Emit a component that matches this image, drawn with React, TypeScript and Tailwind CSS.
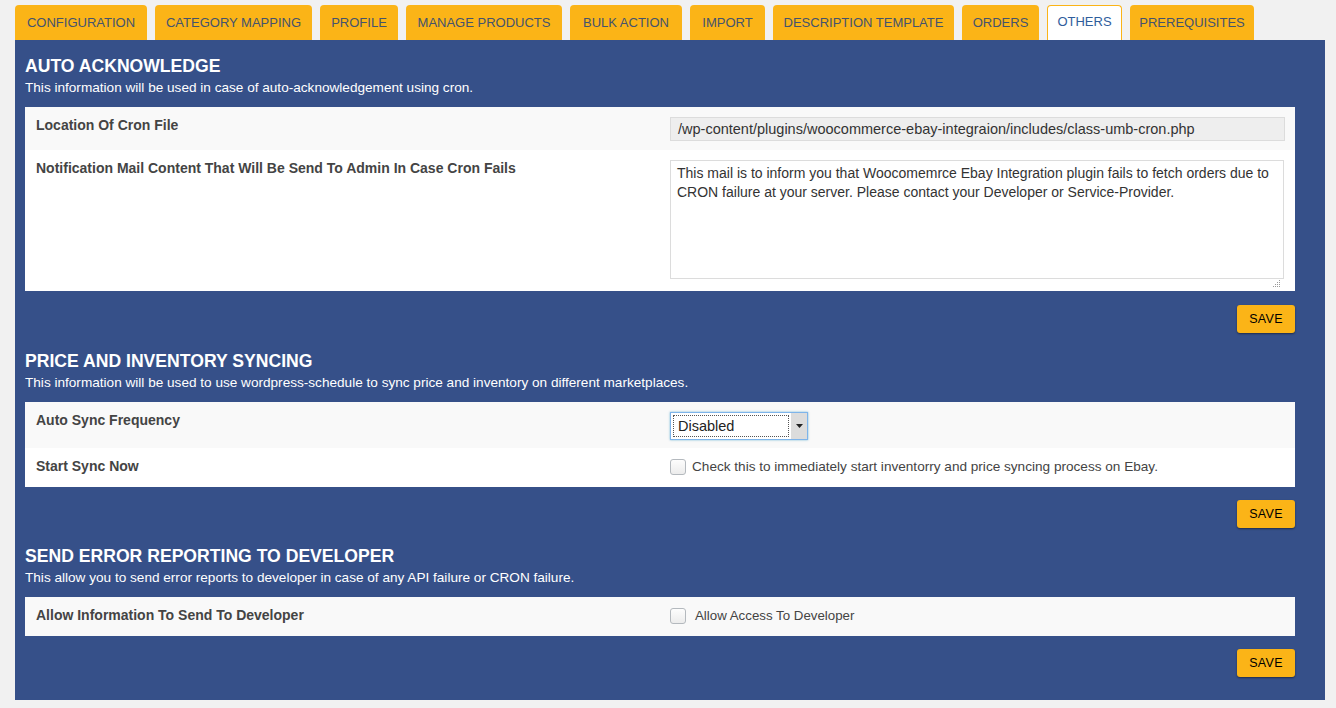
const tabs = [
  { label: 'CONFIGURATION', w: 'w-[132px]' },
  { label: 'CATEGORY MAPPING', w: 'w-[157px]' },
  { label: 'PROFILE', w: 'w-[78px]' },
  { label: 'MANAGE PRODUCTS', w: 'w-[156px]' },
  { label: 'BULK ACTION', w: 'w-[112px]' },
  { label: 'IMPORT', w: 'w-[75px]' },
  { label: 'DESCRIPTION TEMPLATE', w: 'w-[181px]' },
  { label: 'ORDERS', w: 'w-[77px]' },
  { label: 'OTHERS', w: 'w-[75px]', active: true },
  { label: 'PREREQUISITES', w: 'w-[124px]' },
];

const SectionHead = ({ title, sub }: { title: string; sub: string }) => (
  <div>
    <h2 className="text-[17.6px] leading-[24px] font-bold text-white">{title}</h2>
    <p className="mt-[1px] text-[13.6px] leading-[18px] text-white">{sub}</p>
  </div>
);

const SaveButton = ({ first }: { first?: boolean }) => (
  <div className={`flex justify-end ${first ? 'mt-[14px]' : 'mt-[13px]'}`}>
    <button className="h-[28px] w-[58px] rounded-[3px] bg-[#fbb417] text-[12.5px] tracking-wide text-black shadow-[0_1px_2px_rgba(0,0,0,0.45)]">
      SAVE
    </button>
  </div>
);

const Checkbox = () => (
  <span className="inline-block h-[16px] w-[16px] shrink-0 rounded-[3px] border border-[#b4b9be] bg-gradient-to-b from-[#fdfdfd] to-[#ececec]"></span>
);

const Label = ({ children }: { children: string }) => (
  <div className="w-[645px] shrink-0 pl-[11px] text-[14px] leading-[16px] font-bold text-[#444]">{children}</div>
);

export default function App() {
  return (
    <div
      className="min-h-screen bg-[#f1f1f1] pt-[5px] pl-[15px] pr-[11px]"
      style={{ fontFamily: '"Liberation Sans", Arial, sans-serif' }}
    >
      {/* Tabs */}
      <div className="flex gap-2 h-[35px]">
        {tabs.map((t) => (
          <div
            key={t.label}
            className={`${t.w} flex items-center justify-center rounded-t-[4px] text-[13px] ${
              t.active
                ? 'bg-white border border-b-0 border-[#fbb417] text-[#2f5d9c] pb-[3px]'
                : 'bg-[#fbb417] text-[#44536e] pt-[1px]'
            }`}
          >
            {t.label}
          </div>
        ))}
      </div>

      {/* Panel */}
      <div className="w-[1310px] bg-[#365089] pl-[10px] pr-[30px] pt-[14px] pb-[23px]">
        {/* Auto acknowledge */}
        <SectionHead
          title="AUTO ACKNOWLEDGE"
          sub="This information will be used in case of auto-acknowledgement using cron."
        />
        <div className="mt-[10px]">
          <div className="flex h-[43px] bg-[#f9f9f9] pt-[10px]">
            <Label>Location Of Cron File</Label>
            <div className="h-[24px] w-[615px] border border-[#dcdcdc] bg-[#eeeeee] pl-[7px] text-[14.5px] leading-[22px] text-[#333]">
              /wp-content/plugins/woocommerce-ebay-integraion/includes/class-umb-cron.php
            </div>
          </div>
          <div className="flex h-[141px] bg-white pt-[10px]">
            <Label>Notification Mail Content That Will Be Send To Admin In Case Cron Fails</Label>
            <div className="relative">
              <textarea
                readOnly
                className="block h-[119px] w-[614px] resize-none border border-[#dcdcdc] px-[6px] py-[3px] text-[14px] leading-[19px] text-[#333] outline-none"
                defaultValue="This mail is to inform you that Woocomemrce Ebay Integration plugin fails to fetch orders due to CRON failure at your server. Please contact your Developer or Service-Provider."
              />
              {/* resize grip */}
              <svg className="absolute right-[3px] bottom-[3px]" width="9" height="9" viewBox="0 0 9 9">
                <g fill="#9a9a9a">
                  <rect x="7" y="1" width="1" height="1" />
                  <rect x="5" y="3" width="1" height="1" />
                  <rect x="7" y="3" width="1" height="1" />
                  <rect x="3" y="5" width="1" height="1" />
                  <rect x="5" y="5" width="1" height="1" />
                  <rect x="7" y="5" width="1" height="1" />
                  <rect x="1" y="7" width="1" height="1" />
                  <rect x="3" y="7" width="1" height="1" />
                  <rect x="5" y="7" width="1" height="1" />
                  <rect x="7" y="7" width="1" height="1" />
                </g>
              </svg>
            </div>
          </div>
        </div>
        <SaveButton first />

        {/* Price and inventory syncing */}
        <div className="mt-[16px]">
          <SectionHead
            title="PRICE AND INVENTORY SYNCING"
            sub="This information will be used to use wordpress-schedule to sync price and inventory on different marketplaces."
          />
        </div>
        <div className="mt-[10px]">
          <div className="flex h-[46px] bg-[#f9f9f9] pt-[10px]">
            <Label>Auto Sync Frequency</Label>
            <div className="flex h-[28px] w-[138px] border border-[#7eb4ea] bg-white shadow-[0_0_2px_rgba(30,140,190,0.6)]">
              <div className="m-[2px] flex-1 border border-dotted border-[#555] pl-[4px] text-[14.5px] leading-[20px] text-[#222]">
                Disabled
              </div>
              <div className="flex w-[16px] items-center justify-center bg-[#dcdcdc]">
                <svg width="7" height="4" viewBox="0 0 7 4">
                  <path d="M0 0h7L3.5 4z" fill="#222" />
                </svg>
              </div>
            </div>
          </div>
          <div className="flex h-[39px] bg-white pt-[10px]">
            <Label>Start Sync Now</Label>
            <div className="flex items-center gap-[6px] h-[18px] text-[13.6px] text-[#444]">
              <Checkbox />
              <span>Check this to immediately start inventorry and price syncing process on Ebay.</span>
            </div>
          </div>
        </div>
        <SaveButton />

        {/* Send error reporting */}
        <div className="mt-[16px]">
          <SectionHead
            title="SEND ERROR REPORTING TO DEVELOPER"
            sub="This allow you to send error reports to developer in case of any API failure or CRON failure."
          />
        </div>
        <div className="mt-[10px]">
          <div className="flex h-[39px] bg-[#f9f9f9] pt-[10px]">
            <Label>Allow Information To Send To Developer</Label>
            <div className="flex items-center gap-[9px] h-[18px] text-[13.3px] text-[#444]">
              <Checkbox />
              <span>Allow Access To Developer</span>
            </div>
          </div>
        </div>
        <SaveButton />
      </div>
    </div>
  );
}
